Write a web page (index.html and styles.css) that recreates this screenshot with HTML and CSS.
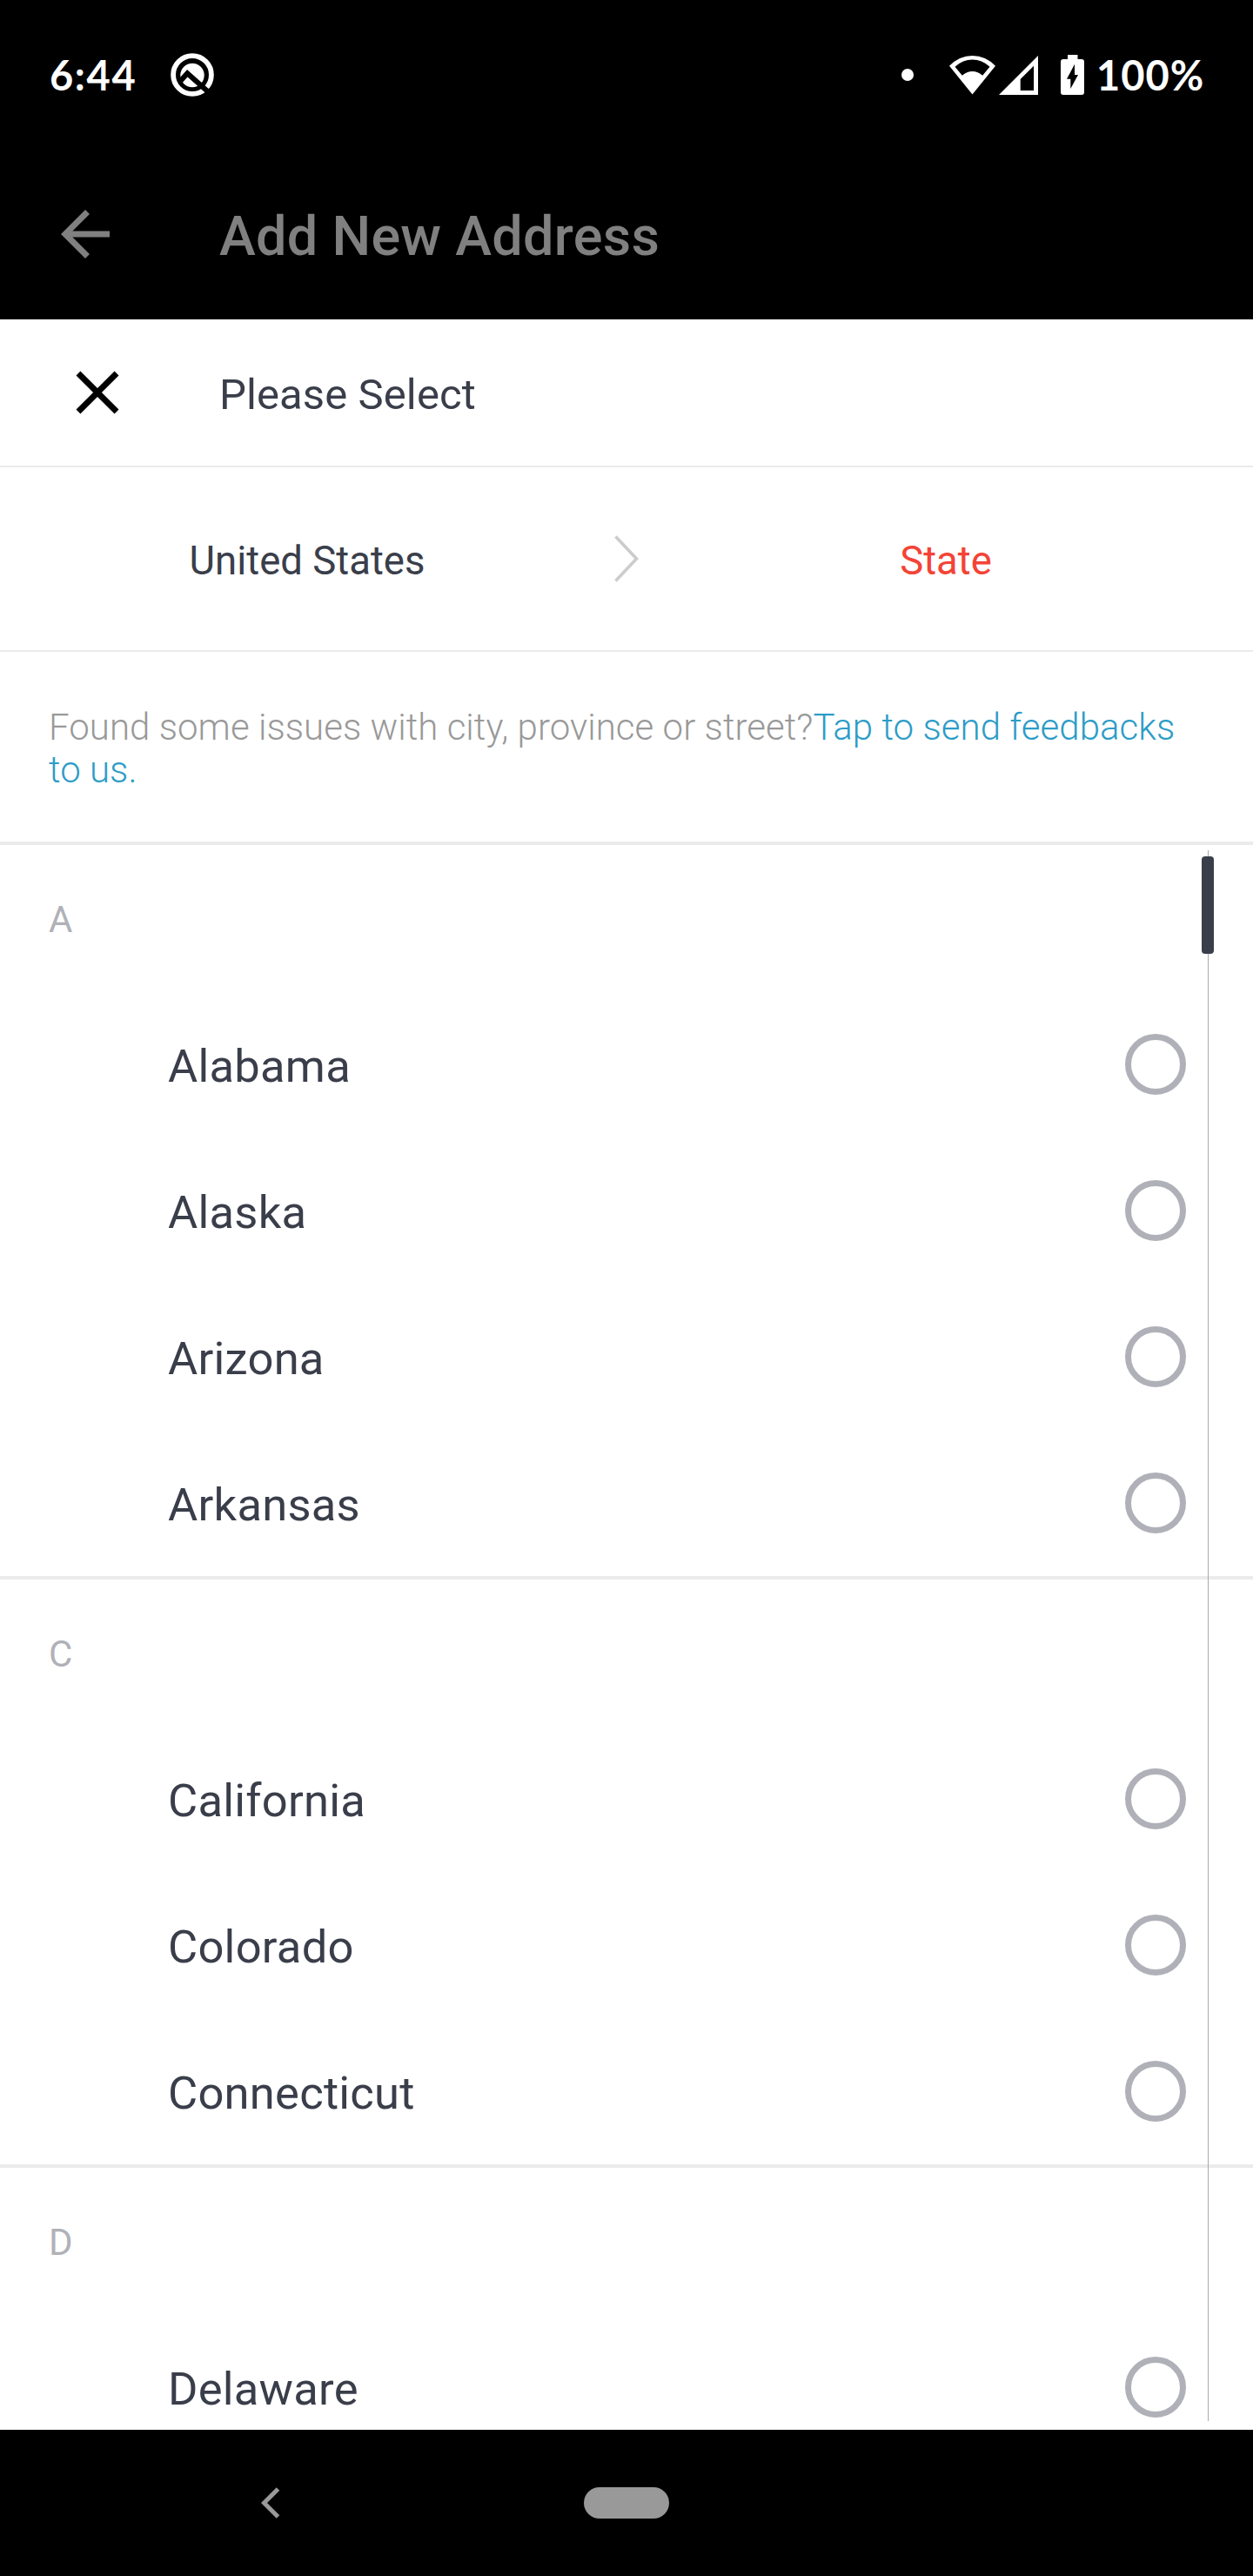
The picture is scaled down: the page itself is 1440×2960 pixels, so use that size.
FILE: index.html
```html
<!DOCTYPE html>
<html lang="en">
<head>
<meta charset="utf-8">
<title>Add New Address</title>
<link rel="stylesheet" href="styles.css">
</head>
<body>
<div class="screen">
  <header class="status-bar">
    <span class="clock">6:44</span>
    <svg class="q-icon" width="50" height="50" viewBox="0 0 50 50">
      <circle cx="25" cy="25" r="21.9" fill="none" stroke="#fff" stroke-width="5.8"/>
      <circle cx="25" cy="25.500" r="13.700" fill="#fff"/>
      <path d="M11 32.500 L19.300 23.300 L46 47" fill="none" stroke="#000" stroke-width="6"/>
    </svg>
    <div class="status-right">
      <span class="dot"></span>
      <svg class="wifi" width="54" height="46" viewBox="0 0 54 46">
        <path fill="#fff" fill-rule="evenodd" d="M0 12.700Q11.500 1 26.500 1T53 12.700L26.500 45.500ZM6.500 13.700L14.800 23.700Q20 19 26.500 19T38.200 23.700L46.500 13.700Q37.500 5.500 26.500 5.500T6.500 13.700Z"/>
      </svg>
      <svg class="signal" width="46" height="46" viewBox="0 0 46 46">
        <path fill="#fff" fill-rule="evenodd" d="M0 46L45 1V46ZM24.700 28V41H40V12.700Z"/>
      </svg>
      <svg class="battery" width="27" height="46" viewBox="0 0 27 46">
        <path fill="#fff" fill-rule="evenodd" d="M8 0H19.500V5H24Q27 5 27 8V43Q27 46 24 46H3Q0 46 0 43V8Q0 5 3 5H8ZM16 10.700L7 27.700H11.300V39L20 23H16Z"/>
      </svg>
      <span class="percent">100%</span>
    </div>
  </header>

  <div class="app-bar">
    <svg class="back" width="84" height="84" viewBox="0 0 24 24"><path fill="#808080" d="M20 11H7.830l5.590-5.590L12 4l-8 8 8 8 1.410-1.410L7.830 13H20v-2z"/></svg>
    <h1 class="app-title">Add New Address</h1>
  </div>

  <main class="sheet">
    <div class="sheet-header">
      <svg class="close" width="84" height="84" viewBox="0 0 24 24"><path fill="#000" d="M19 6.410L17.590 5 12 10.590 6.410 5 5 6.410 10.590 12 5 17.590 6.410 19 12 13.410 17.590 19 19 17.590 13.410 12z"/></svg>
      <h2 class="sheet-title">Please Select</h2>
    </div>

    <div class="steps">
      <span class="step">United States</span>
      <svg width="28" height="54" viewBox="0 0 28 54"><path d="M1.500 1.500L25.500 27L1.500 52.500" fill="none" stroke="#ccc" stroke-width="3.600"/></svg>
      <span class="step step-active">State</span>
    </div>

    <p class="notice">Found some issues with city, province or street?<a class="link">Tap to send feedbacks to us.</a></p>

    <div class="list">
      <section class="group">
        <h3 class="letter">A</h3>
        <div class="row"><span>Alabama</span><i class="radio"></i></div>
        <div class="row"><span>Alaska</span><i class="radio"></i></div>
        <div class="row"><span>Arizona</span><i class="radio"></i></div>
        <div class="row"><span>Arkansas</span><i class="radio"></i></div>
      </section>
      <section class="group">
        <h3 class="letter">C</h3>
        <div class="row"><span>California</span><i class="radio"></i></div>
        <div class="row"><span>Colorado</span><i class="radio"></i></div>
        <div class="row"><span>Connecticut</span><i class="radio"></i></div>
      </section>
      <section class="group">
        <h3 class="letter">D</h3>
        <div class="row"><span>Delaware</span><i class="radio"></i></div>
      </section>
      <div class="track"></div>
      <div class="thumb"></div>
    </div>
  </main>

  <nav class="nav-bar">
    <svg class="nav-back" width="22" height="36" viewBox="0 0 22 36"><path d="M19.500 2L3.500 18L19.500 34" fill="none" stroke="#999" stroke-width="5"/></svg>
    <span class="home-pill"></span>
  </nav>
</div>
</body>
</html>
```
FILE: styles.css
```css
* { box-sizing: border-box; margin: 0; }

body {
  background: #000;
  font-family: Roboto, "Liberation Sans", sans-serif;
  color: #3a3e4a;
}

h1, h2, h3 { font-weight: 400; }

svg { display: block; flex: none; }

.screen {
  width: 1440px;
  height: 2960px;
  display: flex;
  flex-direction: column;
  overflow: hidden;
}

.status-bar {
  height: 171px;
  display: flex;
  align-items: center;
  padding: 0 56px 0 57px;
  color: #fff;
  font-family: Lato, Roboto, sans-serif;
  font-size: 47px;
  font-weight: 700;
}

.clock { width: 139px; letter-spacing: 1.6px; }

.status-right {
  margin-left: auto;
  display: flex;
  align-items: center;
}

.dot { width: 14px; height: 14px; border-radius: 50%; background: #fff; margin-right: 41px; }
.signal { margin-left: 3px; }
.battery { margin-left: 25px; }
.percent { width: 124px; margin-left: 14px; letter-spacing: 1px; }

.app-bar {
  height: 196px;
  display: flex;
  align-items: center;
  padding-left: 56px;
  gap: 112px;
}

.app-title {
  font-size: 63px;
  font-weight: 500;
  letter-spacing: 0.25px;
  padding-top: 0.08em;
  color: #808080;
}

.sheet {
  flex: 1;
  min-height: 0;
  background: #fff;
  display: flex;
  flex-direction: column;
}

.sheet-header {
  height: 170px;
  display: flex;
  align-items: center;
  padding-left: 70px;
  gap: 98px;
  border-bottom: 2px solid #ebebeb;
}

.sheet-title { font-size: 49px; letter-spacing: 0.1px; padding-top: 0.1em; }

.steps {
  height: 212px;
  display: grid;
  grid-template-columns: 1fr 28px 1fr;
  align-items: center;
  border-bottom: 2px solid #ebebeb;
}

.step { font-size: 45.5px; text-align: center; padding-top: 0.1em; }
.step-active { color: #f44336; }

.notice {
  height: 222px;
  padding: 62px 56px 0;
  border-bottom: 4px solid #ebebeb;
  font-size: 42px;
  font-weight: 300;
  letter-spacing: 0.04px;
  line-height: 49px;
  color: #999;
}

.link { color: #2d9cc7; }

.list {
  position: relative;
  flex: 1;
  min-height: 0;
  overflow: hidden;
}

.group { border-bottom: 4px solid #ebebeb; }

.letter {
  height: 168px;
  display: flex;
  align-items: center;
  padding: 0.08em 56px 0;
  font-size: 42px;
  color: #b0b1b8;
}

.row {
  height: 168px;
  display: flex;
  align-items: center;
  justify-content: space-between;
  padding: 0 77px 0 193px;
  font-size: 52.5px;
  letter-spacing: 0.25px;
}

.row span { padding-top: 0.06em; }

.radio {
  width: 70px;
  height: 70px;
  border: 7px solid #b0b1b8;
  border-radius: 50%;
}

.track {
  position: absolute;
  top: 6px;
  bottom: 10px;
  left: 1388px;
  width: 1px;
  background: #aaa;
}

.thumb {
  position: absolute;
  top: 13px;
  left: 1381px;
  width: 14px;
  height: 112px;
  border-radius: 4px;
  background: #3a3e4a;
}

.nav-bar {
  height: 168px;
  display: flex;
  align-items: center;
  padding-left: 300px;
  gap: 349px;
}

.home-pill { width: 98px; height: 36px; border-radius: 18px; background: #999; }
```
